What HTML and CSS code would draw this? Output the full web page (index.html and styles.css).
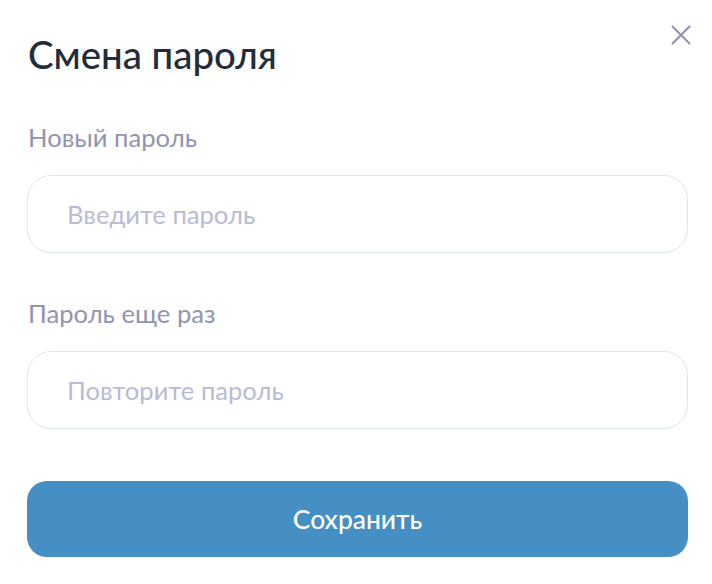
FILE: index.html
```html
<!DOCTYPE html>
<html lang="ru">
<head>
<meta charset="utf-8">
<link rel="stylesheet" href="styles.css">
</head>
<body>
<div class="modal">
  <button class="close" aria-label="Закрыть">
    <svg width="20" height="20" viewBox="0 0 20 20"><path d="M1.5 1.5L18.5 18.5M18.5 1.5L1.5 18.5" stroke="#8e90ad" stroke-width="2" stroke-linecap="round"/></svg>
  </button>
  <h1 class="title">Смена пароля</h1>
  <div class="field">
    <label class="label">Новый пароль</label>
    <input class="input" type="password" placeholder="Введите пароль">
  </div>
  <div class="field">
    <label class="label">Пароль еще раз</label>
    <input class="input" type="password" placeholder="Повторите пароль">
  </div>
  <button class="save">Сохранить</button>
</div>
</body>
</html>
```
FILE: styles.css
```css
html, body { margin: 0; padding: 0; background: #fff; }
body { font-family: Lato, "Noto Sans", sans-serif; }
.modal {
  position: relative;
  width: 712px;
  height: 584px;
  box-sizing: border-box;
  padding: 30px 24px 0 27px;
  display: flex;
  flex-direction: column;
}
.close {
  position: absolute;
  top: 25px;
  right: 21px;
  border: 0;
  background: none;
  padding: 0;
  width: 20px;
  height: 20px;
  cursor: pointer;
}
.title {
  margin: 0 0 0 1px;
  font-size: 38.4px;
  font-weight: 500;
  color: #232c3b;
  line-height: 48px;
}
.field { display: flex; flex-direction: column; }
.field:first-of-type { margin-top: 44px; }
.field + .field { margin-top: 45px; }
.label {
  font-size: 25.6px;
  color: #9294ae;
  line-height: 30px;
  margin-left: 1px;
  margin-bottom: 23px;
}
.input {
  height: 78px;
  box-sizing: border-box;
  border: 1px solid #dde7ee;
  border-radius: 24px;
  padding: 0 39px;
  font-family: inherit;
  font-size: 25.6px;
  color: #232c3b;
  outline: none;
}
.input::placeholder { color: #b9bbd6; }
.save {
  margin-top: 52px;
  height: 76px;
  border: 0;
  border-radius: 20px;
  background: #458fc4;
  color: #fff;
  font-family: inherit;
  font-size: 26.4px;
  font-weight: 500;
}
```
